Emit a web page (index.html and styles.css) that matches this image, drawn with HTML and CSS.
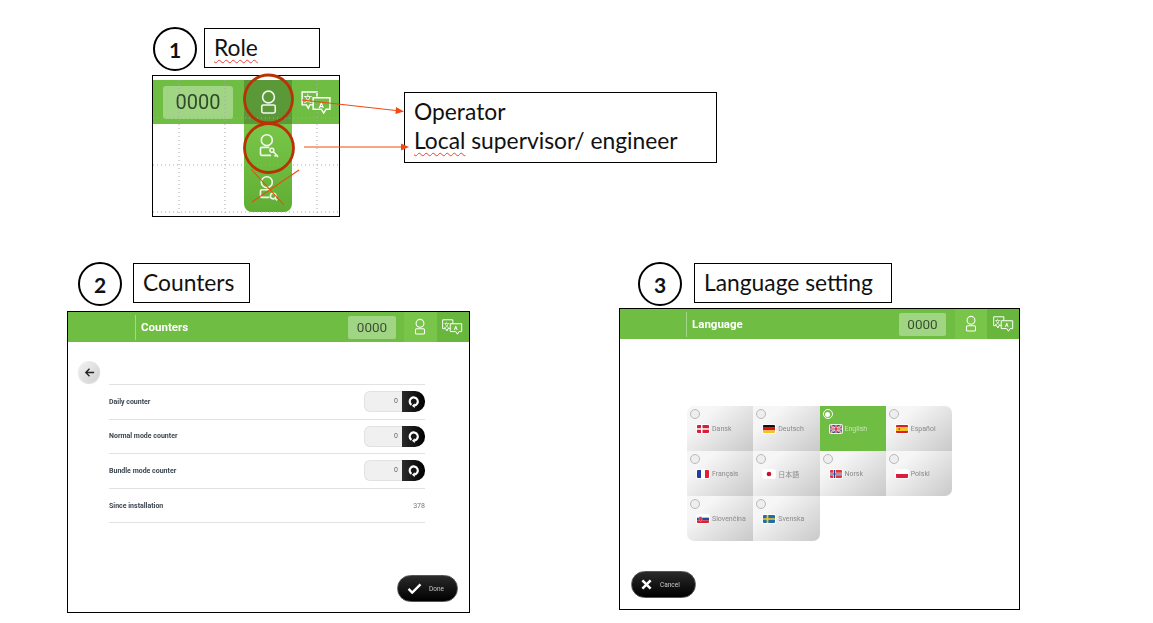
FILE: index.html
```html
<!DOCTYPE html>
<html lang="en">
<head>
<meta charset="utf-8">
<title>Role, counters and language setting</title>
<link rel="stylesheet" href="styles.css">
</head>
<body>
<svg class="defs" aria-hidden="true">
  <symbol id="i-user" viewBox="0 0 32 32">
    <circle cx="16" cy="9.5" r="7" fill="none" stroke="currentColor" stroke-width="1.9"/>
    <rect x="8" y="19" width="16" height="9.5" rx="2" fill="none" stroke="currentColor" stroke-width="1.9"/>
  </symbol>
  <symbol id="i-user-key" viewBox="0 0 32 32">
    <circle cx="14" cy="8.5" r="6.5" fill="none" stroke="currentColor" stroke-width="1.9"/>
    <path d="M17 17H8a1.5 1.5 0 0 0-1.5 1.5V25A1.500 1.500 0 0 0 8 26.500h11" fill="none" stroke="currentColor" stroke-width="1.9"/>
    <circle cx="20" cy="20.500" r="2.300" fill="none" stroke="currentColor" stroke-width="1.800"/>
    <path d="M21.800 22.300l5.500 6M25 26l-1.800 1.700" fill="none" stroke="currentColor" stroke-width="1.900"/>
  </symbol>
  <symbol id="i-user-search" viewBox="0 0 32 32">
    <circle cx="14" cy="8.500" r="6.500" fill="none" stroke="currentColor" stroke-width="1.900"/>
    <path d="M18 17.500H8A1.500 1.500 0 0 0 6.500 19v6A1.500 1.500 0 0 0 8 26.500h9" fill="none" stroke="currentColor" stroke-width="1.900"/>
    <circle cx="21.500" cy="25" r="3.300" fill="none" stroke="currentColor" stroke-width="1.900"/>
    <path d="M23.800 27.500l2.500 2.500" fill="none" stroke="currentColor" stroke-width="1.900"/>
  </symbol>
  <symbol id="i-lang" viewBox="0 0 32 24">
    <path d="M1 1h15.500v13.500H9l-1.500 3.500-2-3.500H1z" fill="none" stroke="currentColor" stroke-width="1.500"/>
    <path d="M12.500 7h17.500v12h-4l-2.500 4-2.500-4h-8.500z" fill="#6fbe44" stroke="currentColor" stroke-width="1.500"/>
    <text x="7" y="11.500" class="lang-a" text-anchor="middle">文</text>
    <text x="21" y="17.300" class="lang-b" text-anchor="middle">A</text>
  </symbol>
  <symbol id="i-reset" viewBox="0 0 16 16">
    <path d="M5.500 12.200A5 5 0 1 1 9 13" fill="none" stroke="#fff" stroke-width="2.700"/>
    <path d="M9.500 10l-3.500 3.200 3.500 2.800z" fill="#fff"/>
  </symbol>
  <symbol id="f-dk" viewBox="0 0 12 8"><rect width="12" height="8" fill="#d5203b"/><path d="M4 0h1.500v8H4zM0 3.200h12v1.600H0z" fill="#fff"/></symbol>
  <symbol id="f-de" viewBox="0 0 12 8"><rect width="12" height="2.700" fill="#111"/><rect y="2.700" width="12" height="2.700" fill="#d8141e"/><rect y="5.400" width="12" height="2.600" fill="#f5c518"/></symbol>
  <symbol id="f-gb" viewBox="0 0 12 8"><rect width="12" height="8" fill="#34407f"/><path d="M0 0l12 8M12 0L0 8" stroke="#fff" stroke-width="1.600"/><path d="M0 0l12 8M12 0L0 8" stroke="#c8102e" stroke-width=".6"/><path d="M6 0v8M0 4h12" stroke="#fff" stroke-width="2.400"/><path d="M6 0v8M0 4h12" stroke="#c8102e" stroke-width="1.200"/></symbol>
  <symbol id="f-es" viewBox="0 0 12 8"><rect width="12" height="8" fill="#d3202a"/><rect y="2" width="12" height="4" fill="#f6c21c"/><rect x="2.500" y="3" width="1.500" height="2" fill="#b5502a"/></symbol>
  <symbol id="f-fr" viewBox="0 0 12 8"><rect width="4" height="8" fill="#1d3f9e"/><rect x="4" width="4" height="8" fill="#fff"/><rect x="8" width="4" height="8" fill="#e3202f"/></symbol>
  <symbol id="f-jp" viewBox="0 0 12 8"><rect width="12" height="8" fill="#fff"/><circle cx="6" cy="4" r="2.300" fill="#c4122f"/></symbol>
  <symbol id="f-no" viewBox="0 0 12 8"><rect width="12" height="8" fill="#e0363f"/><path d="M4.500 0v8M0 4h12" stroke="#fff" stroke-width="2.400"/><path d="M4.500 0v8M0 4h12" stroke="#2a3f86" stroke-width="1.200"/></symbol>
  <symbol id="f-pl" viewBox="0 0 12 8"><rect width="12" height="4" fill="#fff"/><rect y="4" width="12" height="4" fill="#dc1c3d"/></symbol>
  <symbol id="f-sk" viewBox="0 0 12 8"><rect width="12" height="2.700" fill="#fff"/><rect y="2.700" width="12" height="2.700" fill="#1f47a0"/><rect y="5.400" width="12" height="2.600" fill="#e0202f"/><path d="M2 1.800h3v3.400l-1.500 1.200L2 5.200z" fill="#e0202f" stroke="#fff" stroke-width=".4"/></symbol>
  <symbol id="f-se" viewBox="0 0 12 8"><rect width="12" height="8" fill="#1f6db0"/><path d="M4.500 0v8M0 4h12" stroke="#f8cb1a" stroke-width="1.700"/></symbol>
</svg>

<main class="slide">
  <div class="num num-1">1</div>
  <div class="label label-1"><span class="squiggle">Role</span></div>

  <section class="shot-role">
    <div class="role-bar">
      <div class="role-count">0000</div>
      <div class="role-user"><svg class="ic-role"><use href="#i-user"/></svg></div>
      <svg class="ic-role-lang"><use href="#i-lang"/></svg>
    </div>
    <div class="role-menu">
      <svg class="ic-role"><use href="#i-user-key"/></svg>
      <svg class="ic-role"><use href="#i-user-search"/></svg>
    </div>
    <svg class="role-grid" viewBox="0 0 186 140">
      <path d="M26 4V140M72 4V140M164 4V140M0 42H186M0 89H186M0 136H186" fill="none" stroke="#a9a9a9" stroke-width="1" stroke-dasharray="1 3"/>
    </svg>
  </section>

  <div class="label label-roles">
    <div>Operator</div>
    <div><span class="squiggle">Local</span> supervisor/ engineer</div>
  </div>

  <div class="num num-2">2</div>
  <div class="label label-2">Counters</div>

  <section class="screen screen-counters">
    <header class="hdr">
      <div class="hdr-title">Counters</div>
      <div class="hdr-count">0000</div>
      <div class="hdr-btn"><svg class="ic-user"><use href="#i-user"/></svg></div>
      <div class="hdr-btn hdr-btn-lang"><svg class="ic-lang"><use href="#i-lang"/></svg></div>
    </header>
    <div class="counters-body">
      <button class="back" type="button">
        <svg viewBox="0 0 12 12" class="ic-back"><path d="M11 6H2M6 2L2 6l4 4" fill="none" stroke="#222" stroke-width="1.500"/></svg>
      </button>
      <div class="rows">
        <div class="row"><span class="row-name">Daily counter</span><span class="reset"><span class="reset-val">0</span><span class="reset-btn"><svg class="ic-reset"><use href="#i-reset"/></svg></span></span></div>
        <div class="row"><span class="row-name">Normal mode counter</span><span class="reset"><span class="reset-val">0</span><span class="reset-btn"><svg class="ic-reset"><use href="#i-reset"/></svg></span></span></div>
        <div class="row"><span class="row-name">Bundle mode counter</span><span class="reset"><span class="reset-val">0</span><span class="reset-btn"><svg class="ic-reset"><use href="#i-reset"/></svg></span></span></div>
        <div class="row"><span class="row-name">Since installation</span><span class="row-val">378</span></div>
      </div>
    </div>
    <footer class="foot foot-end">
      <button class="pill pill-done" type="button">
        <svg viewBox="0 0 16 12" class="ic-pill"><path d="M1.500 6.500l4 4L14.500 1.500" fill="none" stroke="#fff" stroke-width="2.600"/></svg>
        <span>Done</span>
      </button>
    </footer>
  </section>

  <div class="num num-3">3</div>
  <div class="label label-3">Language setting</div>

  <section class="screen screen-lang">
    <header class="hdr">
      <div class="hdr-title">Language</div>
      <div class="hdr-count">0000</div>
      <div class="hdr-btn"><svg class="ic-user"><use href="#i-user"/></svg></div>
      <div class="hdr-btn hdr-btn-lang"><svg class="ic-lang"><use href="#i-lang"/></svg></div>
    </header>
    <div class="lang-grid">
      <div class="cell c-tl"><i class="radio"></i><div class="opt"><svg class="flag"><use href="#f-dk"/></svg><span>Dansk</span></div></div>
      <div class="cell"><i class="radio"></i><div class="opt"><svg class="flag"><use href="#f-de"/></svg><span>Deutsch</span></div></div>
      <div class="cell cell-on"><i class="radio radio-on"></i><div class="opt"><svg class="flag"><use href="#f-gb"/></svg><span>English</span></div></div>
      <div class="cell c-tr"><i class="radio"></i><div class="opt"><svg class="flag"><use href="#f-es"/></svg><span>Español</span></div></div>
      <div class="cell"><i class="radio"></i><div class="opt"><svg class="flag"><use href="#f-fr"/></svg><span>Français</span></div></div>
      <div class="cell"><i class="radio"></i><div class="opt"><svg class="flag"><use href="#f-jp"/></svg><span class="cjk">日本語</span></div></div>
      <div class="cell"><i class="radio"></i><div class="opt"><svg class="flag"><use href="#f-no"/></svg><span>Norsk</span></div></div>
      <div class="cell c-br"><i class="radio"></i><div class="opt"><svg class="flag"><use href="#f-pl"/></svg><span>Polski</span></div></div>
      <div class="cell c-bl"><i class="radio"></i><div class="opt"><svg class="flag"><use href="#f-sk"/></svg><span>Slovenčina</span></div></div>
      <div class="cell c-br"><i class="radio"></i><div class="opt"><svg class="flag"><use href="#f-se"/></svg><span>Svenska</span></div></div>
    </div>
    <footer class="foot foot-start">
      <button class="pill pill-cancel" type="button">
        <svg viewBox="0 0 12 12" class="ic-x"><path d="M1.500 1.500l9 9M10.500 1.500l-9 9" fill="none" stroke="#fff" stroke-width="2.800"/></svg>
        <span>Cancel</span>
      </button>
    </footer>
  </section>

  <svg class="marks" viewBox="0 0 1153 623" aria-hidden="true">
    <circle cx="268.500" cy="99" r="24" fill="none" stroke="#b83206" stroke-width="2.800"/>
    <circle cx="269" cy="148" r="24.500" fill="none" stroke="#b83206" stroke-width="2.800"/>
    <line x1="302" y1="100" x2="396" y2="110.500" class="mark-line"/>
    <path d="M396 107l8 4.500-8.500 2.500z" class="mark-head"/>
    <line x1="304" y1="147" x2="402" y2="147" class="mark-line"/>
    <path d="M401 143.500l8 3.500-8 3.500z" class="mark-head"/>
    <line x1="251" y1="169" x2="284" y2="205" class="mark-line"/>
    <line x1="299" y1="170" x2="252" y2="202" class="mark-line"/>
  </svg>
</main>
</body>
</html>
```
FILE: styles.css
```css
* { box-sizing: border-box; }
html, body { margin: 0; padding: 0; background: #fff; }
body { font-family: Roboto, "Liberation Sans", sans-serif; overflow: hidden; }
.defs { display: none; }

.slide { position: relative; width: 1153px; height: 623px; overflow: hidden; }

/* Slide annotations */
.num {
  position: absolute; width: 44px; height: 44px;
  border: 2px solid #000; border-radius: 50%;
  display: flex; align-items: center; justify-content: center;
  font: 700 21px Lato, "Liberation Sans", sans-serif; color: #111;
}
.num-1 { left: 153px; top: 27px; }
.num-2 { left: 78px; top: 262px; }
.num-3 { left: 638px; top: 262px; }

.label {
  position: absolute; border: 1px solid #000; background: #fff;
  padding-left: 9px; font: 400 22.800px/37px Lato, "Liberation Sans", sans-serif; color: #111;
}
.label-1 { left: 204px; top: 28px; width: 116px; height: 40px; }
.label-2 { left: 133px; top: 263px; width: 117px; height: 40px; }
.label-3 { left: 694px; top: 263px; width: 198px; height: 40px; }
.label-roles { left: 404px; top: 92px; width: 313px; height: 71px; line-height: 29px; padding-top: 4px; }
.squiggle { text-decoration: underline wavy #e8413a 1px; text-underline-offset: 3px; }

/* Panel 1: enlarged role menu */
.shot-role {
  position: absolute; left: 152px; top: 75px; width: 188px; height: 142px;
  border: 1px solid #000; background: #fff; padding-top: 4px; filter: blur(.3px);
}
.role-bar {
  height: 44px; background: #70bd43; display: flex; align-items: center;
  padding-left: 10px; color: #fff;
}
.role-count {
  width: 70px; height: 33px; background: #a0d683; border-radius: 3px; color: #33482a;
  font: 400 20px/33px Roboto, sans-serif; text-align: center;
}
.role-user {
  width: 48px; height: 44px; margin-left: 11px; background: #5b9838;
  display: flex; align-items: center; justify-content: center;
}
.ic-role { width: 27px; height: 27px; color: #f2f7ee; flex: none; }
.ic-role-lang { width: 31px; height: 23px; margin-left: 9px; color: #fff; }
.role-menu {
  position: absolute; left: 91px; top: 48px; width: 48px; height: 88px; color: #fff;
  background: linear-gradient(#79c649, #5fae33); border-radius: 0 0 8px 8px;
  display: flex; flex-direction: column; align-items: center; gap: 15px; padding-top: 9px;
}
.role-grid { position: absolute; left: 0; top: 0; width: 186px; height: 140px; }

/* Overlay marks: circles, arrows, crosses */
.marks { position: absolute; left: 0; top: 0; width: 1153px; height: 623px; pointer-events: none; }
.mark-line { stroke: #f04a10; stroke-width: 1.100; }
.mark-head { fill: #f04a10; }

/* App screens */
.screen {
  position: absolute; border: 1px solid #000; background: #fff;
  display: flex; flex-direction: column; width: 403px; height: 302px;
}
.screen-counters { left: 67px; top: 311px; }
.screen-lang { left: 619px; top: 308px; width: 401px; }
.screen > * { filter: blur(.3px); }

.hdr {
  flex: none; height: 30px; display: flex; align-items: center; background: #70bd43; color: #fff;
}
.hdr-title {
  margin-left: 67px; padding-left: 5px; height: 25px; line-height: 24px;
  border-left: 1px solid #a3d888; font-weight: 700; font-size: 11.500px; margin-right: auto;
}
.screen-lang .hdr-title { margin-left: 66px; }
.hdr-count {
  width: 48px; height: 23px; background: #a0d683; border-radius: 2px; color: #3d4f33;
  font-size: 13.500px; line-height: 23px; text-align: center; margin-right: 8px;
}
.screen-lang .hdr-count { width: 47px; margin-right: 9px; }
.hdr-btn {
  width: 32.500px; height: 30px; background: #78c549;
  display: flex; align-items: center; justify-content: center;
}
.screen-lang .hdr-btn { width: 32px; }
.hdr-btn-lang { background: #68b63d; }
.ic-user { width: 18px; height: 18px; color: #fff; }
.ic-lang { width: 21px; height: 16px; color: #fff; }
.lang-a { font: 9px "Noto Sans CJK SC", sans-serif; fill: currentColor; }
.lang-b { font: 700 8px Roboto, sans-serif; fill: currentColor; }

/* Counters */
.counters-body { flex: 1; padding: 19px 44px 0 10px; }
.back {
  display: flex; align-items: center; justify-content: center;
  width: 22px; height: 22px; padding: 0; border: 0; border-radius: 50%;
  background: linear-gradient(135deg, #f3f3f3, #cfcfcf); box-shadow: 0 1px 1px rgba(0,0,0,.15);
}
.ic-back { width: 11px; height: 11px; }
.rows { margin: 1px 0 0 31px; border-bottom: 1px solid #e2e2e2; }
.row {
  height: 34.600px; display: flex; align-items: center; justify-content: space-between;
  border-top: 1px solid #e2e2e2;
}
.row-name { font-size: 7px; font-weight: 700; color: #3c4650; }
.row-val { font-size: 7px; color: #777; }
.reset { display: flex; height: 21px; }
.reset-val {
  width: 38px; background: #f0f0f0; border: 1px solid #e2e2e2; border-right: 0;
  border-radius: 6px 0 0 6px; font-size: 7px; line-height: 19px; color: #666;
  text-align: right; padding-right: 4px;
}
.reset-btn {
  width: 23px; background: linear-gradient(90deg, #2b2b2b, #000); border-radius: 0 10px 10px 0;
  display: flex; align-items: center; justify-content: center;
}
.ic-reset { width: 13px; height: 13px; }

/* Footer buttons */
.foot { flex: none; display: flex; padding-bottom: 11px; }
.foot-end { justify-content: flex-end; padding-right: 11px; padding-bottom: 10px; }
.foot-start { padding-left: 11px; }
.pill {
  height: 27px; border: 1px solid #555; border-radius: 14px; background: linear-gradient(#2a2a2a, #000);
  color: #c9c9c9; font: 400 6.500px Roboto, sans-serif; display: flex; align-items: center; padding: 0;
}
.pill-done { width: 61px; padding-left: 9px; gap: 7px; }
.pill-cancel { width: 65px; padding-left: 9px; gap: 8px; }
.ic-pill { width: 15px; height: 11px; }
.ic-x { width: 11px; height: 11px; }

/* Language grid */
.lang-grid {
  margin: 67px 0 0 67px; width: 265px; flex: 1; align-self: flex-start;
  display: grid; grid-template-columns: repeat(4, 66.250px); grid-auto-rows: 45px;
}
.cell {
  background: linear-gradient(140deg, #f6f6f6 25%, #c9c9c9); padding: 2px;
  color: #8a8a8a; font-size: 7px;
}
.cell-on { background: #70bd43; color: #c6e6b3; }
.c-tl { border-top-left-radius: 7px; }
.c-tr { border-top-right-radius: 7px; }
.c-br { border-bottom-right-radius: 7px; }
.c-bl { border-bottom-left-radius: 7px; }
.radio {
  display: block; width: 10px; height: 10px; border: 1px solid #b9b9b9; border-radius: 50%;
  background: #eee; margin-left: 1px; margin-top: 1px;
}
.radio-on { background: #70bd43; border-color: #fff; position: relative; }
.radio-on::after {
  content: ""; position: absolute; left: 1.500px; top: 1.500px; width: 5px; height: 5px;
  border-radius: 50%; background: #fff;
}
.opt { display: flex; align-items: center; gap: 3px; margin: 5px 0 0 8px; height: 10px; }
.flag { width: 12px; height: 8px; flex: none; border-radius: 1px; box-shadow: 0 0 0 1px rgba(255,255,255,.85); }
.cjk { font-family: "Noto Sans CJK JP", sans-serif; }
```
